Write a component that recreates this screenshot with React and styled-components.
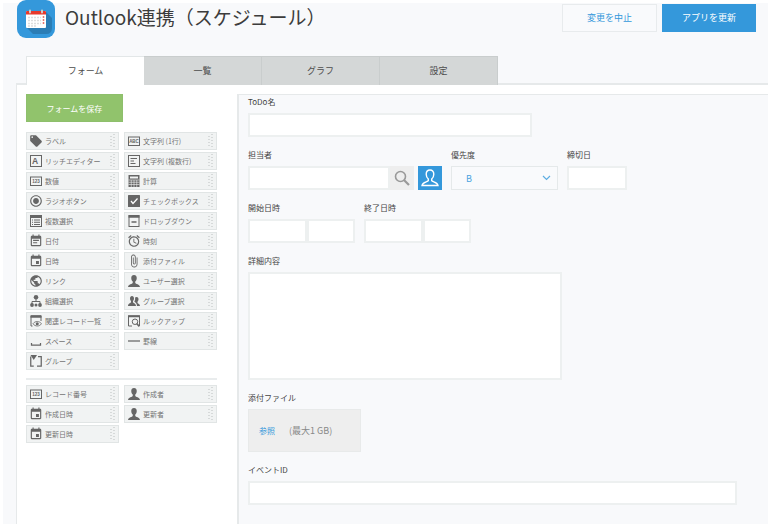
import React from "react";
import styled, { createGlobalStyle } from "styled-components";
import {
  MdLocalOffer,
  MdRadioButtonChecked,
  MdEventNote,
  MdEvent,
  MdPublic,
  MdAlarm,
  MdAttachFile,
} from "react-icons/md";

const GlobalStyle = createGlobalStyle`
  * {
    box-sizing: border-box;
  }
  body {
    margin: 0;
    background: #fff;
    color: #444;
    font-family: "Noto Sans CJK JP", sans-serif;
    font-size: 8px;
  }
  button, input, select, textarea {
    font-family: inherit;
    margin: 0;
    border-radius: 0;
  }
`;

const Page = styled.div`
  display: flex;
  flex-direction: column;
  min-height: 100vh;
  border: solid #fff;
  border-width: 3px 2px 2px 3px;
  background: #f8f9fb;
`;

const Header = styled.header`
  display: flex;
  align-items: flex-start;
  height: 53px;
  padding: 0 12px 0 14px;
`;

const AppIcon = styled.svg`
  width: 38px;
  height: 38px;
  margin-top: -3px;
  flex: none;
`;

const Title = styled.h1`
  flex: 1;
  margin: 0 0 0 10px;
  font-size: 19px;
  font-weight: 400;
  line-height: 28px;
  color: #3c3c3c;
`;

const HeaderButtons = styled.div`
  display: flex;
  gap: 5px;
  padding-top: 1px;
`;

const HeaderButton = styled.button`
  width: ${(p) => (p.$primary ? "94px" : "95px")};
  height: 28px;
  padding: 0;
  border: 1px solid ${(p) => (p.$primary ? "#3498db" : "#e8ebed")};
  background: ${(p) => (p.$primary ? "#3498db" : "#f9fafc")};
  color: ${(p) => (p.$primary ? "#fff" : "#3498db")};
  font-size: 9px;
  line-height: 26px;
`;

const Tabs = styled.nav`
  display: flex;
  padding-left: 23px;
  position: relative;
`;

const Tab = styled.button`
  width: 118px;
  height: 29px;
  padding: 0;
  border: solid ${(p) => (p.$active ? "#e3e7e8" : "#c9cdcd")};
  border-width: ${(p) => (p.$active ? "1px 0 0 1px" : "1px 1px 0 0")};
  background: ${(p) => (p.$active ? "#fff" : "#d4d7d7")};
  color: #4c4c4c;
  font-size: 9px;
  line-height: 28px;
`;

const Panel = styled.main`
  flex: 1;
  display: flex;
  margin: -2px 0 0 13px;
  padding-top: 9px;
  border: solid #e6e9ea;
  border-width: 2px 0 0 1px;
  background: #fff;
`;

const Sidebar = styled.aside`
  width: 220px;
  flex: none;
  padding: 0 20px 0 9px;
`;

const SaveButton = styled.button`
  width: 97px;
  height: 28px;
  padding: 0;
  border: 1px solid #8ebf6c;
  background: #91c36c;
  color: #fff;
  font-size: 8px;
`;

const Palette = styled.div`
  display: grid;
  grid-template-columns: 1fr 1fr;
  gap: 2px 5px;
  margin-top: 10px;
`;

const Divider = styled.hr`
  height: 2px;
  margin: 8px 0 -5px;
  border: 0;
  background: #e9eced;
`;

const PaletteItem = styled.div`
  display: flex;
  align-items: center;
  height: 18px;
  padding: 0 2px 0 3px;
  border: 1px solid #e1e5e5;
  background: #f1f3f3;
  color: #747474;
  font-size: 7px;
  line-height: 16px;
  white-space: nowrap;
  cursor: move;
`;

const IconSlot = styled.span`
  display: flex;
  align-items: center;
  justify-content: center;
  flex: none;
  width: 12px;
  height: 16px;
  color: #666;

  svg {
    flex: none;
  }
`;

const ItemName = styled.span`
  flex: 1;
  margin-left: 3px;
`;

const Canvas = styled.form`
  flex: 1;
  min-width: 0;
  padding: 0 31px 0 9px;
  border: solid #e6e9ea;
  border-width: 1px 0 0 2px;
  background: #f8f9fb;
`;

const Row = styled.div`
  display: flex;
  gap: 9px;
  margin-bottom: 11px;
`;

const Field = styled.div`
  width: 100%;
  max-width: ${(p) => p.$width || "none"};
`;

const Label = styled.label`
  display: block;
  margin-bottom: 4px;
  color: #444;
  font-size: 8px;
  line-height: 14px;
`;

const Controls = styled.div`
  display: flex;
`;

const Input = styled.input`
  display: block;
  flex: ${(p) => p.$grow || 1};
  width: 100%;
  min-width: 0;
  height: 24px;
  padding: 0 6px;
  border: 2px solid #edf0f0;
  background: #fff;
  font-size: 8px;
`;

const TextArea = styled.textarea`
  display: block;
  width: 100%;
  height: 108px;
  padding: 6px;
  border: 2px solid #edf0f0;
  background: #fff;
  font-size: 8px;
  resize: none;
`;

const IconButton = styled.button`
  display: flex;
  align-items: center;
  justify-content: center;
  flex: none;
  width: 24px;
  height: 24px;
  margin-left: ${(p) => (p.$blue ? "4px" : "0")};
  padding: 0;
  border: 0;
  background: ${(p) => (p.$blue ? "#3498db" : "#eee")};
`;

const SelectBox = styled.div`
  display: grid;
  align-items: center;

  > * {
    grid-area: 1 / 1;
  }
  svg {
    justify-self: end;
    margin-right: 7px;
    pointer-events: none;
  }
`;

const Select = styled.select`
  appearance: none;
  width: 100%;
  height: 24px;
  padding: 0 14px;
  border: 1px solid #e5e9ea;
  background: #f9fafc;
  color: #4ba3df;
  font-size: 9px;
`;

const FileBox = styled.div`
  display: flex;
  align-items: center;
  gap: 14px;
  height: 43px;
  padding: 0 10px;
  border: 1px solid #e8eaea;
  background: #eee;
  color: #888;
  font-size: 9px;
  white-space: nowrap;
`;

const BrowseLink = styled.a`
  color: #3498db;
  font-size: 8px;
  text-decoration: none;
`;

const Svg = ({ children }) => (
  <svg width="12" height="12" viewBox="0 0 24 24" fill="none" stroke="#666" strokeWidth="2">
    {children}
  </svg>
);

const Glyph = styled.text`
  fill: #666;
  stroke: none;
  font-family: "Liberation Sans", sans-serif;
  font-weight: 700;
  text-anchor: middle;
`;

const RichIcon = () => (
  <Svg>
    <rect x="1" y="1" width="22" height="22" />
    <Glyph x="10" y="18" fontSize="17">A</Glyph>
  </Svg>
);

const BoxedIcon = ({ text }) => (
  <Svg>
    <rect x="1" y="4" width="22" height="17" />
    <Glyph x="12" y="16" fontSize="9">{text}</Glyph>
  </Svg>
);

const LinesIcon = () => (
  <Svg>
    <rect x="1" y="1" width="22" height="22" />
    <path d="M5 7h13M5 12h7M5 17h10" />
  </Svg>
);

const CalcIcon = () => (
  <Svg>
    <rect x="1" y="0" width="22" height="24" fill="#666" stroke="none" />
    <path d="M4 5h16" stroke="#f1f3f3" strokeWidth="4" />
    <path d="M1 10h22M1 14.500h22M1 19h22M6.500 10v14M12 10v14M17.500 10v14" stroke="#f1f3f3" strokeWidth="1.200" />
  </Svg>
);

const CheckIcon = () => (
  <Svg>
    <rect width="24" height="24" rx="1" fill="#666" stroke="none" />
    <path d="M6 12l4 5 9-10" stroke="#fff" strokeWidth="2.500" />
  </Svg>
);

const ListIcon = () => (
  <Svg>
    <rect x="1" y="1" width="22" height="22" />
    <path d="M1 3.500h22" strokeWidth="5" />
    <path d="M8 10h12M8 14.500h12M8 19h12M4 10h2M4 14.500h2M4 19h2" />
  </Svg>
);

const DropIcon = () => (
  <Svg>
    <rect x="2" y="1" width="20" height="22" />
    <path d="M1 3h22" strokeWidth="5" />
    <path d="M7 14h10" strokeWidth="3" />
  </Svg>
);

const OrgIcon = () => (
  <Svg>
    <circle cx="12" cy="4.500" r="4.500" fill="#666" stroke="none" />
    <path d="M12 8v5M4 19v-6h16v6" />
    <circle cx="4" cy="20" r="3.800" fill="#666" stroke="none" />
    <circle cx="12" cy="20" r="3" fill="#666" stroke="none" />
    <circle cx="20" cy="20" r="3.800" fill="#666" stroke="none" />
  </Svg>
);

const RelatedIcon = () => (
  <Svg>
    <path d="M5 22H2V2h20v10" />
    <path d="M1 3h22" strokeWidth="5" />
    <path d="M6 17.500c4-6 13-6 17 0c-4 6-13 6-17 0z" strokeWidth="1.600" />
    <circle cx="14.500" cy="17.500" r="3" fill="#666" stroke="none" />
  </Svg>
);

const LookupIcon = () => (
  <Svg>
    <path d="M8 22H1V2h22v20" />
    <path d="M0 2.500h24" strokeWidth="4" />
    <circle cx="14" cy="13.500" r="5.500" />
    <path d="M17.500 17l5 6" strokeWidth="3" />
  </Svg>
);

const UserIcon = () => (
  <Svg>
    <path
      d="M12 0c-3.500 0-5.500 2.500-5.500 6c0 3.500 1.500 5.500 3 7v3c-1 2-8.500 2-9.500 8h24c-1-6-8.500-6-9.500-8v-3c1.500-1.500 3-3.500 3-7c0-3.500-2-6-5.500-6z"
      fill="#666"
      stroke="none"
    />
  </Svg>
);

const UsersIcon = () => (
  <Svg>
    <path
      d="M8 2c-2.500 0-4 2-4 5c0 2.500 1 4 2 5v2.500C5 16.500 0 17 0 22h16c0-5-5-5.500-6-7.500V12c1-1 2-2.500 2-5c0-3-1.500-5-4-5z"
      fill="#666"
      stroke="none"
    />
    <path
      d="M17 4c-1.500 0-2.500.6-3 1.500c.8 3 0 5.500-1.500 7.500c2 2 5.500 3.500 5.500 9h6c0-4-4-4.500-5-6v-2.500c1-1 2-2.500 2-5c0-3-1.500-4.500-4-4.500z"
      fill="#666"
      stroke="none"
    />
  </Svg>
);

const SpaceIcon = () => (
  <Svg>
    <path d="M3 16v4h18v-4" strokeWidth="2.500" />
  </Svg>
);

const LineIcon = () => (
  <Svg>
    <path d="M0 12h24" strokeWidth="2.500" />
  </Svg>
);

const GroupIcon = () => (
  <Svg>
    <path d="M1.500 3v19h6M14 22h8.500v-6M22.500 16V3H16" strokeWidth="2.500" />
    <path d="M1 0h13l-6.500 10z" fill="#666" stroke="none" />
  </Svg>
);

const Grip = () => (
  <svg width="7" height="14" viewBox="0 0 7 14" fill="none" stroke="#d6d9d9" strokeWidth="2">
    <path d="M2 2v12" strokeDasharray="1 2" />
    <path d="M5 0v13" strokeDasharray="1 2" />
  </svg>
);

const SearchIcon = () => (
  <svg width="16" height="16" viewBox="0 0 16 16" fill="none" stroke="#999" strokeWidth="1.600">
    <circle cx="6.500" cy="6.500" r="5" />
    <path d="M10 10l5 5" strokeWidth="2.200" />
  </svg>
);

const PersonIcon = () => (
  <svg width="18" height="18" viewBox="0 0 18 18" fill="none" stroke="#fff" strokeWidth="1.400">
    <path d="M9 1C6.500 1 5.200 2.800 5.200 5.200c0 2.300 1 3.800 2.100 4.800v1.600C6.500 13 1.500 13 1 16.500h16c-.5-3.500-5.500-3.500-6.300-4.900V10c1.100-1 2.100-2.500 2.100-4.800C12.800 2.800 11.500 1 9 1z" />
  </svg>
);

const CalendarLogo = () => (
  <AppIcon viewBox="0 0 38 38">
    <rect width="38" height="38" rx="9" fill="#3498db" />
    <path d="M29 12l6 6v10q0 6-6 6H16L9 27z" fill="#2b7db5" />
    <rect x="9" y="11" width="20" height="17" rx="1" fill="#fff" />
    <path d="M9 14.500V12q0-1 1-1h18q1 0 1 1v2.500z" fill="#e8392c" />
    <path d="M11 17.500h13M11 20.500h13M11 23.500h13M11 26h8" stroke="#ddd" strokeWidth="1.500" strokeDasharray="2 1" />
    <path d="M26.500 16v8" stroke="#e8776f" strokeWidth="1.500" strokeDasharray="2 1" />
    <path d="M13 10.500v2M25 10.500v2" stroke="#ccc" strokeWidth="2" strokeLinecap="round" />
  </AppIcon>
);

const tabs = ["フォーム", "一覧", "グラフ", "設定"];

const fieldParts = [
  ["ラベル", <MdLocalOffer size={14} />],
  ["文字列 (1行)", <BoxedIcon text="ABC" />],
  ["リッチエディター", <RichIcon />],
  ["文字列 (複数行)", <LinesIcon />],
  ["数値", <BoxedIcon text="123" />],
  ["計算", <CalcIcon />],
  ["ラジオボタン", <MdRadioButtonChecked size={14} />],
  ["チェックボックス", <CheckIcon />],
  ["複数選択", <ListIcon />],
  ["ドロップダウン", <DropIcon />],
  ["日付", <MdEventNote size={14} />],
  ["時刻", <MdAlarm size={14} />],
  ["日時", <MdEvent size={14} />],
  ["添付ファイル", <MdAttachFile size={14} />],
  ["リンク", <MdPublic size={14} />],
  ["ユーザー選択", <UserIcon />],
  ["組織選択", <OrgIcon />],
  ["グループ選択", <UsersIcon />],
  ["関連レコード一覧", <RelatedIcon />],
  ["ルックアップ", <LookupIcon />],
  ["スペース", <SpaceIcon />],
  ["罫線", <LineIcon />],
  ["グループ", <GroupIcon />],
];

const systemParts = [
  ["レコード番号", <BoxedIcon text="123" />],
  ["作成者", <UserIcon />],
  ["作成日時", <MdEvent size={14} />],
  ["更新者", <UserIcon />],
  ["更新日時", <MdEvent size={14} />],
];

const PaletteList = ({ items }) => (
  <Palette>
    {items.map(([name, icon]) => (
      <PaletteItem key={name}>
        <IconSlot>{icon}</IconSlot>
        <ItemName>{name}</ItemName>
        <Grip />
      </PaletteItem>
    ))}
  </Palette>
);

const App = () => {
  return (
    <>
      <GlobalStyle />
      <Page>
        <Header>
          <CalendarLogo />
          <Title>Outlook連携（スケジュール）</Title>
          <HeaderButtons>
            <HeaderButton type="button">変更を中止</HeaderButton>
            <HeaderButton type="button" $primary>アプリを更新</HeaderButton>
          </HeaderButtons>
        </Header>
        <Tabs>
          {tabs.map((tab, i) => (
            <Tab key={tab} type="button" $active={i === 0}>{tab}</Tab>
          ))}
        </Tabs>
        <Panel>
          <Sidebar>
            <SaveButton type="button">フォームを保存</SaveButton>
            <PaletteList items={fieldParts} />
            <Divider />
            <PaletteList items={systemParts} />
          </Sidebar>
          <Canvas>
            <Row>
              <Field $width="284px">
                <Label htmlFor="todo">ToDo名</Label>
                <Input id="todo" />
              </Field>
            </Row>
            <Row>
              <Field $width="194px">
                <Label htmlFor="assignee">担当者</Label>
                <Controls>
                  <Input id="assignee" />
                  <IconButton type="button" aria-label="検索"><SearchIcon /></IconButton>
                  <IconButton type="button" aria-label="ユーザー" $blue><PersonIcon /></IconButton>
                </Controls>
              </Field>
              <Field $width="107px">
                <Label htmlFor="priority">優先度</Label>
                <SelectBox>
                  <Select id="priority" defaultValue="B">
                    <option>A</option>
                    <option>B</option>
                    <option>C</option>
                  </Select>
                  <svg width="9" height="6" viewBox="0 0 9 6" fill="none" stroke="#5dade2">
                    <path d="M1 1l3.500 3.500L8 1" strokeWidth="1.200" />
                  </svg>
                </SelectBox>
              </Field>
              <Field $width="60px">
                <Label htmlFor="deadline">締切日</Label>
                <Input id="deadline" />
              </Field>
            </Row>
            <Row>
              <Field $width="107px">
                <Label htmlFor="start">開始日時</Label>
                <Controls>
                  <Input id="start" $grow={4} />
                  <Input aria-label="開始時刻" $grow={3} />
                </Controls>
              </Field>
              <Field $width="107px">
                <Label htmlFor="end">終了日時</Label>
                <Controls>
                  <Input id="end" $grow={4} />
                  <Input aria-label="終了時刻" $grow={3} />
                </Controls>
              </Field>
            </Row>
            <Row>
              <Field $width="314px">
                <Label htmlFor="detail">詳細内容</Label>
                <TextArea id="detail" />
              </Field>
            </Row>
            <Row>
              <Field $width="113px">
                <Label as="div">添付ファイル</Label>
                <FileBox>
                  <BrowseLink href="#">参照</BrowseLink>
                  <span>(最大1 GB)</span>
                </FileBox>
              </Field>
            </Row>
            <Row>
              <Field>
                <Label htmlFor="event">イベントID</Label>
                <Input id="event" />
              </Field>
            </Row>
          </Canvas>
        </Panel>
      </Page>
    </>
  );
};

export default App;
